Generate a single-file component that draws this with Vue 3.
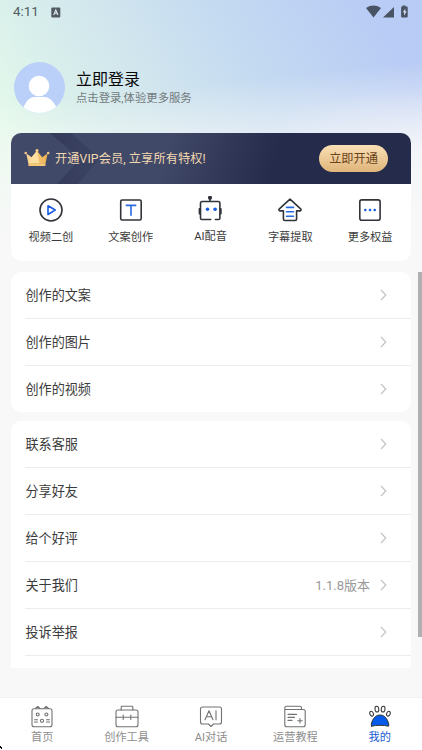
<script setup>
const features = [
  { icon: 'play', label: '视频二创' },
  { icon: 'text', label: '文案创作' },
  { icon: 'robot', label: 'AI配音' },
  { icon: 'extract', label: '字幕提取' },
  { icon: 'more', label: '更多权益' },
]
const groups = [
  [{ label: '创作的文案' }, { label: '创作的图片' }, { label: '创作的视频' }],
  [
    { label: '联系客服' },
    { label: '分享好友' },
    { label: '给个好评' },
    { label: '关于我们', value: '1.1.8版本' },
    { label: '投诉举报' },
  ],
]
const tabs = [
  { icon: 'home', label: '首页' },
  { icon: 'tools', label: '创作工具' },
  { icon: 'chat', label: 'AI对话' },
  { icon: 'course', label: '运营教程' },
  { icon: 'mine', label: '我的', active: true },
]
</script>

<template>
  <div class="screen">
    <header class="status">
      <span class="time">4:11</span>
      <svg class="badge" width="10" height="11" viewBox="0 0 10 11">
        <rect x=".3" y=".5" width="9" height="10" rx="1" fill="#505a60" />
        <path d="M2.7 8 4.8 3 6.9 8M3.5 6.3h2.6" fill="none" stroke="#dcebef" stroke-width="1.1" />
      </svg>
      <svg class="signals" width="44" height="14" viewBox="0 0 44 14">
        <g fill="#485363">
          <path d="M0 3Q7.5-1.8 15 3L7.5 12.5Z" />
          <path d="M17 12.5 28 2v10.5Z" />
          <path d="M36.5 1.5V.4h3v1.1h1.2q1 0 1 1v9q0 1-1 1h-4.6q-1 0-1-1v-9q0-1 1-1Z" />
        </g>
        <path d="M39.4 3.4 36.8 7.3h1.3v3.4l2.5-4.5h-1.4Z" fill="#d4dff7" />
      </svg>
    </header>

    <section class="profile">
      <svg width="51" height="51" viewBox="0 0 51 51">
        <defs><clipPath id="face"><circle cx="25.5" cy="25.5" r="25.5" /></clipPath></defs>
        <g clip-path="url(#face)">
          <rect width="51" height="51" fill="#bad0f9" />
          <circle cx="25" cy="24" r="10.3" fill="#fff" />
          <path d="M9 46Q14 35 20 35h11q6 0 12 11v6H9Z" fill="#fff" />
        </g>
      </svg>
      <div class="who">
        <div class="login">立即登录</div>
        <div class="hint">点击登录,体验更多服务</div>
      </div>
    </section>

    <main class="content">
      <section class="card vip-card">
        <div class="vip">
          <svg class="crown" width="26" height="18" viewBox="0 0 26 18">
            <defs>
              <linearGradient id="gold" x2="1" y2="0">
                <stop stop-color="#fbd99b" /><stop offset="1" stop-color="#eeb150" />
              </linearGradient>
            </defs>
            <path d="M2.3 4.6 7.7 8.2 13 1.7l5.2 6.5 5.4-3.6-2.1 9.8H4.4Z" fill="url(#gold)" />
            <path d="M13 1.7 7.7 8.2 4.4 14.4h11Z" fill="#ffdf9f" />
            <path d="M4.4 14.2h17.1v2.2q0 .7-.7.7H5.1q-.7 0-.7-.7Z" fill="#f6c775" />
            <circle cx="1.7" cy="4" r="1.3" fill="#f5c787" />
            <circle cx="13" cy="1.6" r="1.5" fill="#ffcf85" />
            <circle cx="24.2" cy="4" r="1.3" fill="#f5c787" />
          </svg>
          <span class="vip-text">开通VIP会员, 立享所有特权!</span>
          <button class="open">立即开通</button>
        </div>
        <div class="features">
          <div v-for="f in features" :key="f.icon" class="feature" :class="f.icon">
            <svg width="28" height="28" viewBox="0 0 28 28" fill="none" stroke="#303338" stroke-width="1.6" stroke-linecap="round" stroke-linejoin="round">
              <template v-if="f.icon === 'play'">
                <circle cx="14" cy="14" r="11" />
                <path d="m11 9.7 7.2 4.3-7.2 4.5Z" stroke="#195ce0" />
              </template>
              <template v-else-if="f.icon === 'text'">
                <rect x="3.7" y="4" width="20.5" height="20" rx="1.5" />
                <path d="M8.7 9.4h10.6M14 9.4v10.4" stroke="#286ae2" stroke-linecap="butt" />
              </template>
              <template v-else-if="f.icon === 'robot'">
                <path d="M14.7 23.5H5.8q-1.3 0-1.3-1.3V7.2q0-1.7 1.7-1.7h16q1.7 0 1.7 1.7v15q0 1.3-1.3 1.3h-3.2M14 2v3.5M3.4 12.7v5M24.9 12.7v5" />
                <circle cx="14" cy="1.8" r="1.3" fill="#303338" />
                <g fill="#195ce0" stroke="none"><circle cx="11.5" cy="13.2" r="1.8" /><circle cx="19.1" cy="13.2" r="1.8" /></g>
              </template>
              <template v-else-if="f.icon === 'extract'">
                <path d="M14 3.2 3.1 13.1q-.5 1.8 1 1.8h3.3V23q0 1.5 1.5 1.5h10.2q1.5 0 1.5-1.5v-8.1h3.3q1.5 0 1-1.8Z" />
                <path d="M10.5 11.4h7M10.5 15.8h7M10.5 20.2h7" stroke="#286ae2" />
              </template>
              <template v-else>
                <rect x="3.8" y="3.9" width="20.3" height="20.3" rx="2" />
                <g fill="#195ce0" stroke="none"><circle cx="9.3" cy="14" r="1.3" /><circle cx="14" cy="14" r="1.3" /><circle cx="18.7" cy="14" r="1.3" /></g>
              </template>
            </svg>
            <span>{{ f.label }}</span>
          </div>
        </div>
      </section>

      <section v-for="(rows, i) in groups" :key="i" class="card list">
        <div v-for="row in rows" :key="row.label" class="row">
          <span class="name">{{ row.label }}</span>
          <span class="value">{{ row.value }}</span>
          <svg width="7" height="12" viewBox="0 0 7 12" fill="none" stroke="#bfc3c9" stroke-width="1.2">
            <path d="m1 1 4.8 5L1 11" />
          </svg>
        </div>
      </section>
    </main>

    <nav class="tabs">
      <div v-for="t in tabs" :key="t.icon" class="tab" :class="{ active: t.active }">
        <svg width="26" height="24" viewBox="0 0 26 24" fill="none" stroke="#727272" stroke-width="1.1" stroke-linecap="round" stroke-linejoin="round">
          <template v-if="t.icon === 'home'">
            <rect x="3" y="3.8" width="20" height="18" rx="2" />
            <path d="M6.5 3.5 8.8 1.3 11 3.5M15 3.5l2.2-2.2 2.3 2.2M5.5 14.7h3M5.5 17h3M17.5 14.7h3M17.5 17h3" />
            <circle cx="8.7" cy="9.5" r="1.5" /><circle cx="17.4" cy="9.5" r="1.5" /><circle cx="13" cy="15.8" r="1.6" />
          </template>
          <template v-else-if="t.icon === 'tools'">
            <rect x="2" y="5" width="22" height="16.8" rx="2" />
            <path d="M7.2 5V2q0-.8.8-.8h10q.8 0 .8.8v3M2 12.3h6.7M9.5 12.3h7M17.2 12.3H24M9.2 10v4.6M16.8 10v4.6" />
          </template>
          <template v-else-if="t.icon === 'chat'">
            <path d="M4.5 2h17q2 0 2 2v13q0 2-2 2h-6L13 21.5 10.5 19h-6q-2 0-2-2V4q0-2 2-2Z" />
            <path d="m7 14.8 4-9 4 9M8.5 11.7h5M18 5.8v9" />
          </template>
          <template v-else-if="t.icon === 'course'">
            <path d="M2.8 4.5h18.4q2 0 2 2v13.2q0 2-2 2H4.8q-2 0-2-2V3q0-1.7 1.7-1.7h13.3q1.7 0 1.7 1.7v1.5M6 9.4h8.5M6 12.4h6.5M6 15.4h4M15.7 15.8h4.5M18 13.5V18" />
          </template>
          <template v-else>
            <g stroke="#343638" stroke-width="1">
              <ellipse cx="4.6" cy="8.7" rx="1.7" ry="2.5" transform="rotate(-25 4.6 8.7)" />
              <ellipse cx="9.9" cy="4.2" rx="1.9" ry="2.9" transform="rotate(-7 9.9 4.2)" />
              <ellipse cx="16.1" cy="4.2" rx="1.9" ry="2.9" transform="rotate(7 16.1 4.2)" />
              <ellipse cx="21.4" cy="8.7" rx="1.7" ry="2.5" transform="rotate(25 21.4 8.7)" />
              <path d="M4.4 21.2Q3.5 20 5.4 15.6 8 10 13 10t7.6 5.6Q22.5 20 21.6 21.2 17.5 20.3 13 20.3T4.4 21.2Z" fill="#075bea" />
            </g>
          </template>
        </svg>
        <span>{{ t.label }}</span>
      </div>
    </nav>
    <div class="scrollbar"></div>
    <svg class="corner" width="3" height="4" viewBox="0 0 3 4"><path d="M0 0h1v1h1v2H1V2H0Z" /></svg>
  </div>
</template>

<style>
body { margin: 0; overflow: hidden; }
</style>

<style scoped>
.screen {
  position: relative;
  display: flex;
  flex-direction: column;
  width: 422px;
  height: 750px;
  overflow: hidden;
  color: #3b3b3b;
  font-family: Roboto, "Noto Sans CJK SC", sans-serif;
  background:
    linear-gradient(174deg, rgba(248,248,248,0) 105px, rgba(248,248,248,.35) 140px, rgba(248,248,248,.8) 195px, #f8f8f8 250px) top / 422px 270px no-repeat,
    radial-gradient(ellipse 180px 75px at 422px 165px, rgba(240,242,250,.8), rgba(240,242,250,0)),
    linear-gradient(60deg, #e5faeb 15%, #daf0eb 27%, #d1e5ee 45%, #c4daf1 64%, #b9ccf5 90%) top / 422px 270px no-repeat,
    #f8f8f8;
}
.status { display: flex; align-items: center; height: 24px; flex: none; padding: 0 14px 0 13px; box-sizing: border-box; color: #505b60; }
.time { font-size: 13.4px; line-height: 24px; }
.badge { margin-left: 12px; }
.signals { margin-left: auto; margin-right: -2px; }
.profile { display: flex; height: 51px; flex: none; margin: 38px 0 20px 14px; }
.who { padding: 7px 0 0 11px; }
.login { font-size: 16px; line-height: 22px; color: #080808; }
.hint { font-size: 11.35px; line-height: 15px; color: #727a7c; }
.content { width: 400px; height: 535px; flex: none; margin-left: 11px; overflow: hidden; display: flex; flex-direction: column; }
.card { flex: none; border-radius: 10px; background: #fff; overflow: hidden; }
.vip-card { height: 128px; margin-bottom: 11px; }
.vip {
  display: flex;
  align-items: center;
  box-sizing: border-box;
  height: 51px;
  padding: 0 23px 0 13px;
  position: relative;
  background: linear-gradient(105deg, #414969 0, #414969 38%, #252b4a 66%);
}
.vip::before {
  content: "";
  position: absolute;
  left: 39px;
  top: 0;
  width: 50px;
  height: 51px;
  background: linear-gradient(90deg, #343b59, #3c4464);
  clip-path: polygon(0 0, 42% 0, 100% 50%, 56% 100%, 14% 100%, 60% 52%);
}
.crown, .vip-text, .open { position: relative; }
.crown { margin-top: -2px; }
.vip-text { margin: -1px 0 0 5px; color: #f3d8b0; font-size: 12.2px; white-space: pre; letter-spacing: .1px; }
.open {
  width: 69px;
  height: 27px;
  margin-left: auto;
  padding: 1px 0 0;
  border: 0;
  border-radius: 14px;
  background: linear-gradient(#fae0b6, #dfb57a);
  color: #6b431b;
  font: inherit;
  font-size: 12.2px;
  line-height: 26px;
}
.features { display: grid; grid-template-columns: repeat(5, 1fr); margin: 0 1px 0 0; }
.feature { display: flex; flex-direction: column; align-items: center; padding-top: 12px; font-size: 11.2px; line-height: 16px; }
.feature span { margin-top: 6px; }
.feature.robot span { margin-top: 5px; }
.list { margin-bottom: 9px; }
.row { display: flex; align-items: center; box-sizing: border-box; height: 47px; margin-left: 14px; padding-right: 24px; border-bottom: 1px solid #ececec; font-size: 13.1px; }
.name { padding: 0 0 1px .5px; }
.list:nth-child(2) .row:last-child { height: 46px; border-bottom: 0; }
.list:last-child { height: 270px; }
.value { margin-left: auto; margin-right: 10px; padding-bottom: 1px; color: #999; font-size: 13px; }
.tabs { display: grid; grid-template-columns: repeat(5, 1fr); height: 53px; box-sizing: border-box; margin-top: 29px; border-top: 1px solid #f2f2f2; background: #fff; flex: none; }
.tab { display: flex; flex-direction: column; align-items: center; padding-top: 7px; color: #8e8e8e; font-size: 11.2px; line-height: 16px; }
.tab span { margin-top: 1px; }
.tab.active { color: #175bd0; }
.scrollbar { position: absolute; right: 0; top: 272px; width: 4px; height: 365px; background: #b0b0b0; }
.corner { position: absolute; left: 0; bottom: 0; }
</style>
